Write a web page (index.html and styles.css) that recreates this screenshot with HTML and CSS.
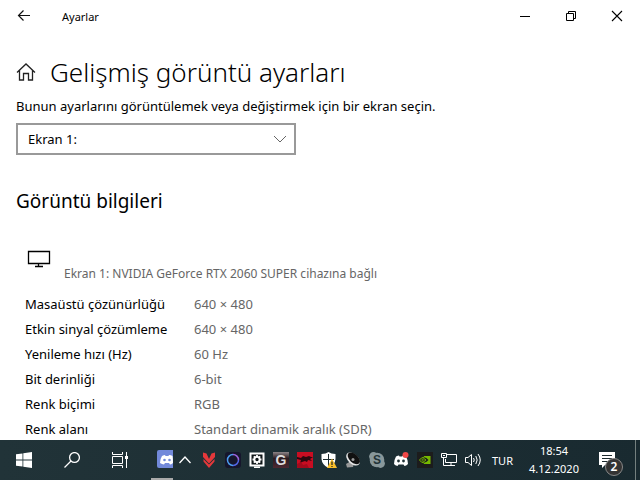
FILE: index.html
```html
<!DOCTYPE html>
<html lang="tr">
<head>
    <meta charset="UTF-8">
    <meta name="viewport" content="width=device-width, initial-scale=1.0">
    <title>Ayarlar</title>
    <link rel="stylesheet" href="styles.css">
</head>
<body>
    <header class="titlebar">
        <button class="back-btn" aria-label="Geri">
            <svg width="14" height="14" viewBox="0 0 14 14" fill="none" stroke="#111" stroke-width="1.2"><path d="M13 6.500H1.500M6.500 1.500L1.500 6.500L6.500 11.500"/></svg>
        </button>
        <span class="app-name">Ayarlar</span>
        <div class="window-btns">
            <button aria-label="Simge durumuna küçült">
                <svg width="12" height="12" viewBox="0 0 12 12" stroke="#000"><path d="M1 6.500H11"/></svg>
            </button>
            <button aria-label="Önceki boyut">
                <svg width="12" height="12" viewBox="0 0 12 12" fill="none" stroke="#000"><path d="M1.500 3.500H8.500V10.500H1.500ZM3.500 3.500V1.500H10.500V8.500H8.500"/></svg>
            </button>
            <button aria-label="Kapat">
                <svg width="12" height="12" viewBox="0 0 12 12" stroke="#000" stroke-width="1.100"><path d="M1 1L11 11M11 1L1 11"/></svg>
            </button>
        </div>
    </header>

    <main>
        <div class="page-title">
            <a href="#" class="home-link" aria-label="Giriş">
                <svg width="20" height="20" viewBox="0 0 20 20" fill="none" stroke="#222" stroke-width="1.300"><path d="M1 10.500L10 2L19 10.500M3.500 8.500V18H7.500V11.500H12.500V18H16.500V8.500"/></svg>
            </a>
            <h1>Gelişmiş görüntü ayarları</h1>
        </div>

        <label class="hint" for="display">Bunun ayarlarını görüntülemek veya değiştirmek için bir ekran seçin.</label>
        <div class="select-wrap">
            <select id="display">
                <option>Ekran 1:</option>
            </select>
            <svg class="select-arrow" width="14" height="8" viewBox="0 0 14 8" fill="none" stroke="#666"><path d="M1 1L7 7L13 1"/></svg>
        </div>

        <h2>Görüntü bilgileri</h2>

        <div class="monitor">
            <svg width="24" height="18" viewBox="0 0 24 18"><path d="M1.500 1.500H22.500V13.500H1.500Z" fill="none" stroke="#000" stroke-width="1.300"/><path d="M11.500 14V16.500M8 16.500H16" stroke="#000" stroke-width="1.300"/></svg>
            <p>Ekran 1: NVIDIA GeForce RTX 2060 SUPER cihazına bağlı</p>
        </div>

        <table class="info">
            <tr><th scope="row">Masaüstü çözünürlüğü</th><td>640 × 480</td></tr>
            <tr><th scope="row">Etkin sinyal çözümleme</th><td>640 × 480</td></tr>
            <tr><th scope="row">Yenileme hızı (Hz)</th><td>60 Hz</td></tr>
            <tr><th scope="row">Bit derinliği</th><td>6-bit</td></tr>
            <tr><th scope="row">Renk biçimi</th><td>RGB</td></tr>
            <tr><th scope="row">Renk alanı</th><td>Standart dinamik aralık (SDR)</td></tr>
        </table>
    </main>

    <footer class="taskbar">
        <button class="task-btn" aria-label="Başlat">
            <svg width="16" height="16" viewBox="0 0 16 16" fill="#fff"><path d="M0 2.300L6.500 1.400V7.600H0ZM7.300 1.300L16 0V7.600H7.300ZM0 8.400H6.500V14.600L0 13.700ZM7.300 8.400H16V16L7.300 14.700Z"/></svg>
        </button>
        <button class="task-btn" aria-label="Ara">
            <svg width="16" height="16" viewBox="0 0 16 16" fill="none" stroke="#fff" stroke-width="1.300"><circle cx="10.500" cy="5.500" r="4.900"/><path d="M7 9L0.500 15.500"/></svg>
        </button>
        <button class="task-btn" aria-label="Görev Görünümü">
            <svg width="16" height="16" viewBox="0 0 16 16" fill="none" stroke="#fff"><path d="M0.500 0V2.500H10.500V0M0.500 4.500H10.500V11.500H0.500ZM0.500 16V13.500H10.500V16M14.500 0V16"/><path d="M13 4H16V7H13Z" fill="#fff" stroke="none"/></svg>
        </button>
        <div class="apps">
            <button class="app-btn" aria-label="Discord">
                <svg width="16" height="18" viewBox="0 0 16 18"><path d="M2 0H16V18H2Q0 18 0 16V2Q0 0 2 0Z" fill="#7289da"/><path d="M5 6Q7 5 8 5L8.500 6H11.500L12 5Q14 5 15.500 6Q16 9 16 13Q14 14.500 13 14.500L12 13H8L7 14.500Q5 14 3 13Q3 9 5 6Z" fill="#fff"/><circle cx="7.500" cy="10" r="1.300" fill="#7289da"/><circle cx="12.500" cy="10" r="1.300" fill="#7289da"/></svg>
            </button>
        </div>
        <div class="tray">
            <button aria-label="Gizli simgeleri göster">
                <svg width="16" height="16" viewBox="0 0 16 16" fill="none" stroke="#fff" stroke-width="1.300"><path d="M2.500 11L8 5L13.500 11"/></svg>
            </button>
            <button aria-label="Valorant Vanguard">
                <svg width="16" height="16" viewBox="0 0 16 16" fill="#e5383b"><path d="M2 0.500L5.500 1.500L8 7L10.500 1.500L14 0.500V5L8 11.500L2 5Z"/><path d="M2.500 7L8 12.500L13.500 7V9.500L8 16L2.500 9.500Z"/></svg>
            </button>
            <button aria-label="Ekran kaydedici">
                <svg width="16" height="16" viewBox="0 0 16 16" fill="none" stroke-width="1.500"><rect width="16" height="16" rx="3" fill="#16162c"/><path d="M8 2.500A5.500 5.500 0 0 0 8 13.500" stroke="#4c9df0"/><path d="M8 13.500A5.500 5.500 0 0 0 13.500 8" stroke="#5265e4"/><path d="M13.500 8A5.500 5.500 0 0 0 8 2.500" stroke="#9a63dc"/></svg>
            </button>
            <button aria-label="Grafik ayarları">
                <svg width="16" height="16" viewBox="0 0 16 16" fill="none" stroke="#fff"><path d="M1.500 1.500H14.500V13.500H1.500Z" fill="#101719" stroke-width="2"/><path d="M5 15.500H11M8 3V12M3.500 7.500H12.500M4.800 4.300L11.200 10.700M11.200 4.300L4.800 10.700" stroke-width="1.800"/><circle cx="8" cy="7.500" r="2.600" fill="#101719" stroke-width="1.800"/></svg>
            </button>
            <button aria-label="MSI Gaming">
                <svg width="16" height="16" viewBox="0 0 16 16"><defs><linearGradient id="metal" x1="0" y1="0" x2="0" y2="1"><stop offset="0" stop-color="#8c8588"/><stop offset="0.400" stop-color="#2b1b1f"/><stop offset="1" stop-color="#4d2932"/></linearGradient></defs><rect width="16" height="16" fill="url(#metal)"/><text class="g-mark" x="8" y="13" text-anchor="middle">G</text></svg>
            </button>
            <button aria-label="MSI Dragon Center">
                <svg width="16" height="16" viewBox="0 0 16 16"><rect width="16" height="16" fill="#c80d22"/><path d="M0 5L4 6L6 4L9 5L12 4L14 5L16 5L13 7L15 9L11 8L10 10L8 9L5 10L3 11L4 8L0 7Z" fill="#2b080f"/><path d="M0 12L4 10L6 13L10 12L12 16H0Z" fill="#a30a1c"/></svg>
            </button>
            <button aria-label="Windows Güvenliği">
                <svg width="16" height="16" viewBox="0 0 16 16"><path d="M7.500 0Q10 2 14.500 2V7Q14 13 7.500 16Q1 13 0.500 7V2Q5 2 7.500 0Z" fill="#fff"/><path d="M7.500 2V14M2 7.500H13" stroke="#1d2c30"/><path d="M11 6.500L16 16H6Z" fill="#fbc02d"/><path d="M11 9.500V13M11 14V15" stroke="#222" stroke-width="1.200"/></svg>
            </button>
            <button aria-label="Ses yöneticisi">
                <svg width="16" height="16" viewBox="0 0 16 16"><path d="M1 12L6 9L9 12L8 15L2 15.500Z" fill="#999"/><ellipse cx="8" cy="7" rx="8" ry="5" transform="rotate(43 8 7)" fill="#e7e7e7"/><ellipse cx="8.800" cy="6.300" rx="7.300" ry="4.300" transform="rotate(43 8.800 6.300)" fill="#111"/><circle cx="8" cy="7.500" r="1.500" fill="#999"/></svg>
            </button>
            <button aria-label="Skype">
                <svg width="16" height="16" viewBox="0 0 16 16"><g fill="#88979a"><circle cx="8" cy="8" r="7.300"/><circle cx="4.500" cy="4.500" r="4.400"/><circle cx="11.500" cy="11.500" r="4.400"/></g><text class="s-mark" x="8" y="12" text-anchor="middle">S</text></svg>
            </button>
            <button aria-label="Discord bildirimleri">
                <svg width="16" height="16" viewBox="0 0 16 16"><path d="M3 4.500Q5 3.500 6 3.500L6.500 4.500H9L10 3.500Q12 3.500 13 4.500Q15 8 15 12Q13 14 11.500 14L10.500 12.500H5.500L4.500 14Q2 13.500 1 12Q1 8 3 4.500Z" fill="#fff"/><circle cx="5.500" cy="9" r="1.400" fill="#213236"/><circle cx="10.500" cy="9" r="1.400" fill="#213236"/><circle cx="12.500" cy="3" r="3" fill="#f04747"/></svg>
            </button>
            <button aria-label="NVIDIA Ayarları">
                <svg width="16" height="16" viewBox="0 0 16 16" fill="none"><rect width="16" height="16" fill="#1c1c1c"/><path d="M7 4H13.500V12H7V10.800Q10 10 11.500 8Q9.500 5.500 7 5.300Z" fill="#76b900"/><path d="M7 5.200Q4 5.500 2.500 8Q4 10.700 7 10.900M7 6.800Q5.500 7 4.700 8Q5.500 9.300 7 9.300Q8.500 9 9 8Q8.200 6.800 7 6.800" stroke="#76b900"/></svg>
            </button>
            <button aria-label="Ağ">
                <svg width="16" height="16" viewBox="0 0 16 16" fill="none" stroke="#fff"><path d="M6 2.500H15.500V10.500H4.500V7M10 11V13.500M5 13.500H14M0.500 1.500H5.500V5.500H0.500ZM2.500 6V13.500H5M2 3.500H4"/></svg>
            </button>
            <button aria-label="Ses">
                <svg width="16" height="16" viewBox="0 0 16 16" fill="none" stroke="#fff"><path d="M0.500 5.500H3L6.500 2.500V13.500L3 10.500H0.500ZM8.500 6Q10 8 8.500 10M10.800 4Q13.500 8 10.800 12M13 2Q17.500 8 13 14"/></svg>
            </button>
            <button class="lang">TUR</button>
            <button class="clock"><time>18:54</time><time>4.12.2020</time></button>
            <button class="notify" aria-label="2 yeni bildirim">
                <svg width="16" height="16" viewBox="0 0 16 16"><path d="M0 0H16V13H6L3 16V13H0Z" fill="#fff"/><path d="M3 3.500H13M3 6.500H13M3 9.500H9" stroke="#1c2b2f"/></svg>
                <span class="badge">2</span>
            </button>
        </div>
        <button class="show-desktop" aria-label="Masaüstünü göster"></button>
    </footer>
</body>
</html>
```

FILE: styles.css
```css
* {
    box-sizing: border-box;
}
body {
    display: flex;
    flex-direction: column;
    height: 100vh;
    margin: 0;
    overflow: hidden;
    background-color: #fff;
    color: #000;
    font-family: "Noto Sans", "Open Sans", sans-serif;
    font-size: 13px;
}
button {
    display: flex;
    align-items: center;
    justify-content: center;
    padding: 0;
    border: none;
    background: none;
    color: inherit;
    font: inherit;
}
svg {
    display: block;
    flex: none;
}

/* Title bar */
.titlebar {
    display: flex;
    flex: none;
    align-items: center;
    height: 32px;
}
.back-btn {
    width: 48px;
    height: 32px;
}
.app-name {
    padding-left: 14px;
    font-size: 11px;
}
.window-btns {
    display: flex;
    margin-left: auto;
}
.window-btns button {
    width: 46px;
    height: 32px;
}

/* Settings page */
main {
    flex: 1;
    min-height: 0;
    padding: 20px 16px 0;
    overflow: hidden;
}
.page-title {
    display: flex;
    align-items: center;
    gap: 14px;
    height: 40px;
}
h1 {
    margin: 0;
    font-size: 26px;
    font-weight: 300;
    line-height: 40px;
}
.hint {
    display: block;
    margin-top: 4px;
    line-height: 20px;
}
.select-wrap {
    position: relative;
    max-width: 280px;
    margin-top: 7px;
}
select {
    width: 100%;
    height: 32px;
    padding: 0 10px;
    border: 2px solid #999;
    border-radius: 0;
    background-color: #fff;
    color: #000;
    font: inherit;
    appearance: none;
}
.select-arrow {
    position: absolute;
    top: 12px;
    right: 9px;
    pointer-events: none;
}
h2 {
    margin: 32px 0 0;
    font-size: 19px;
    font-weight: 400;
    line-height: 28px;
}
.monitor {
    display: flex;
    gap: 13px;
    margin-top: 35px;
    padding-left: 11px;
    color: #666;
    font-size: 12px;
}
.monitor p {
    margin: 14px 0 0;
    line-height: 20px;
}
.info {
    margin: 7px 0 0 9px;
    border-collapse: collapse;
}
.info th,
.info td {
    height: 25px;
    padding: 0;
    font-weight: 400;
    text-align: left;
    white-space: nowrap;
}
.info th {
    width: 169px;
}
.info td {
    color: #666;
}

/* Taskbar */
.taskbar {
    display: flex;
    flex: none;
    height: 40px;
    background: linear-gradient(to right, #213338, #192a30);
    color: #fff;
}
.task-btn {
    width: 48px;
}
.apps {
    display: flex;
    flex: 1;
    padding-left: 7px;
}
.app-btn {
    width: 22px;
    padding-left: 6px;
    border-bottom: 2px solid #aaa;
}
.tray {
    display: flex;
    font-size: 11px;
}
.tray button {
    width: 24px;
}
.tray .lang {
    width: 35px;
}
.tray .clock {
    flex-direction: column;
    width: 68px;
    line-height: 18px;
}
.tray .notify {
    position: relative;
    width: 47px;
    padding-right: 9px;
}
.badge {
    position: absolute;
    top: 18px;
    left: 17px;
    width: 18px;
    height: 18px;
    border: 1px solid #888;
    border-radius: 50%;
    background-color: #333;
    font-size: 12px;
    font-weight: 600;
    line-height: 16px;
    text-align: center;
}
.show-desktop {
    width: 5px;
    border-left: 1px solid #74807f;
}
.g-mark {
    fill: #ddd;
    font-family: "Liberation Sans", sans-serif;
    font-size: 14px;
    font-weight: 700;
}
.s-mark {
    fill: #213338;
    font-family: "Liberation Sans", sans-serif;
    font-size: 12px;
    font-weight: 700;
}
```
